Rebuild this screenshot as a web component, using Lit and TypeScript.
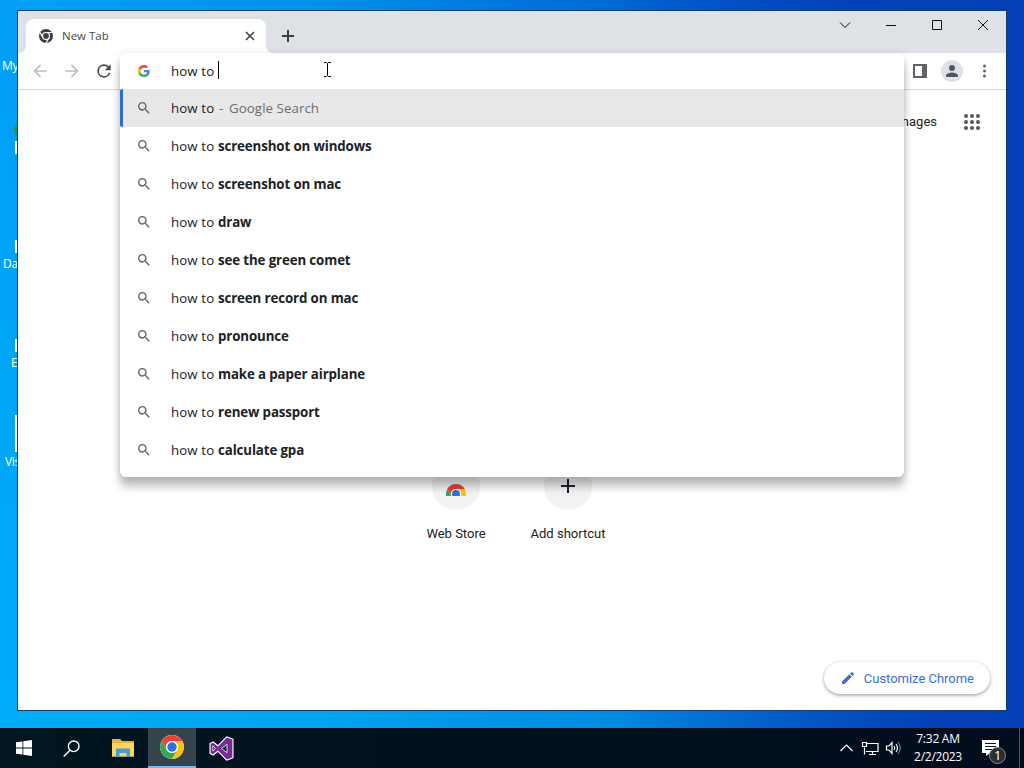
import { LitElement, html, svg, css, nothing } from 'lit';
import { customElement, property } from 'lit/decorators.js';

const QUERY = 'how to ';

const SUGGESTIONS = [
  'screenshot on windows',
  'screenshot on mac',
  'draw',
  'see the green comet',
  'screen record on mac',
  'pronounce',
  'make a paper airplane',
  'renew passport',
  'calculate gpa',
];

const SEARCH_PATH =
  'M15.5 14h-.79l-.28-.27A6.47 6.47 0 0 0 16 9.5 6.5 6.5 0 1 0 9.5 16c1.61 0 3.09-.59 4.23-1.57l.27.28v.79l5 4.99L20.49 19l-4.99-5zm-6 0C7.01 14 5 11.99 5 9.5S7.01 5 9.5 5 14 7.01 14 9.5 11.99 14 9.5 14z';
const BACK_PATH = 'M20 11H7.83l5.59-5.59L12 4l-8 8 8 8 1.41-1.41L7.83 13H20v-2z';
const FORWARD_PATH = 'M12 4l-1.41 1.41L16.17 11H4v2h12.17l-5.58 5.59L12 20l8-8z';
const RELOAD_PATH =
  'M17.65 6.35A7.96 7.96 0 0 0 12 4a8 8 0 1 0 7.73 10h-2.08A6 6 0 1 1 12 6c1.66 0 3.14.69 4.22 1.78L13 11h7V4l-2.35 2.35z';
const PERSON_PATH = 'M12 12a4 4 0 1 0 0-8 4 4 0 0 0 0 8zm0 2c-2.67 0-8 1.34-8 4v2h16v-2c0-2.66-5.33-4-8-4z';
const PENCIL_PATH =
  'M3 17.25V21h3.75L17.81 9.94l-3.75-3.75L3 17.25zM20.71 7.04a1 1 0 0 0 0-1.41l-2.34-2.34a1 1 0 0 0-1.41 0l-1.83 1.83 3.75 3.75 1.83-1.83z';

const chromeLogo = (size: number) => html`
  <svg width=${size} height=${size} viewBox="0 0 48 48">
    <circle cx="24" cy="24" r="22" fill="#fff" />
    <path fill="#ea4335" d="M24 13h19.05A22 22 0 0 0 4.95 13l9.52 16.5A11 11 0 0 1 24 13z" />
    <path fill="#fbc116" d="M33.53 29.5 24 46a22 22 0 0 0 19.05-33H24a11 11 0 0 1 9.53 16.5z" />
    <path fill="#34a853" d="M14.47 29.5 4.95 13A22 22 0 0 0 24 46l9.53-16.5a11 11 0 0 1-19.06 0z" />
    <circle cx="24" cy="24" r="11" fill="#fff" />
    <circle cx="24" cy="24" r="8.8" fill="#2f70e0" />
  </svg>
`;

@customElement('line-icon')
export class LineIcon extends LitElement {
  @property() path = '';
  @property({ type: Number }) size = 20;

  static override styles = css`
    :host {
      display: flex;
    }

    svg {
      fill: currentColor;
    }
  `;

  protected override render() {
    return html`<svg width=${this.size} height=${this.size} viewBox="0 0 24 24"><path d=${this.path} /></svg>`;
  }
}

@customElement('omnibox-popup')
export class OmniboxPopup extends LitElement {
  static override styles = css`
    :host {
      display: block;
      height: 424px;
      background: #fff;
      border-radius: 6px;
      box-shadow:
        0 10px 9px rgba(0, 0, 0, 0.24),
        0 1px 8px rgba(0, 0, 0, 0.12);
      font: 13.3px/18px 'Open Sans', 'Noto Sans', sans-serif;
      color: #202124;
    }

    .input,
    .row {
      display: flex;
      align-items: center;
      box-sizing: border-box;
      height: 38px;
      padding-left: 16px;
      white-space: pre;
    }

    .input {
      height: 36px;
    }

    .icon {
      display: flex;
      justify-content: center;
      width: 16px;
      margin-right: 19px;
      color: #5f6368;
    }

    .query {
      width: 47px;
      letter-spacing: 0.1px;
    }

    .caret {
      width: 1px;
      height: 18px;
      margin-top: -2px;
      background: #000;
    }

    .pointer {
      margin: -4px 0 0 104px;
    }

    .selected {
      padding-left: 13px;
      border-left: 3px solid #2f6fd0;
      border-radius: 2px 0 0 2px;
      background: #e8e8e8;
    }

    .dash {
      width: 10px;
      margin-left: 1px;
      color: #6b6e72;
    }

    .source {
      letter-spacing: 0.06px;
      color: #6b6e72;
    }

    .match {
      font-weight: 700;
      letter-spacing: -0.12px;
    }
  `;

  private _row(content: unknown, selected = false) {
    return html`
      <div class="row ${selected ? 'selected' : ''}">
        <span class="icon"><line-icon .path=${SEARCH_PATH} .size=${16}></line-icon></span>
        <span class="query">${QUERY}</span>${content}
      </div>
    `;
  }

  protected override render() {
    return html`
      <div class="input">
        <span class="icon">
          <svg width="12" height="12" viewBox="0 0 48 48">
            <path fill="#4285f4" d="M47 24.5c0-1.6-.2-3.2-.5-4.7H24v9h12.9c-.6 3-2.3 5.5-4.8 7.2v6h7.8C44.4 37.8 47 31.7 47 24.5z" />
            <path fill="#34a853" d="M24 48c6.5 0 11.9-2.1 15.9-5.9l-7.8-6c-2.1 1.4-4.9 2.3-8.1 2.3-6.3 0-11.5-4.2-13.4-9.9h-8v6.2C6.6 42.6 14.6 48 24 48z" />
            <path fill="#fbbc05" d="M10.6 28.5a14.4 14.4 0 0 1 0-9.1v-6.2h-8a24 24 0 0 0 0 21.5l8-6.2z" />
            <path fill="#ea4335" d="M24 9.5c3.5 0 6.7 1.2 9.2 3.6l6.9-6.9C35.9 2.4 30.5 0 24 0 14.6 0 6.6 5.4 2.6 13.2l8 6.2C12.5 13.7 17.7 9.5 24 9.5z" />
          </svg>
        </span>
        <span class="query">${QUERY}</span><span class="caret"></span>
        <svg class="pointer" width="9" height="17" viewBox="0 0 9 17" fill="none" stroke="#000">
          <path d="M1 1.5h2.5l1 1 1-1H8M4.5 2.5v12M1 15.5h2.5l1-1 1 1H8" />
        </svg>
      </div>
      ${this._row(html`<span class="dash">-</span><span class="source">Google Search</span>`, true)}
      ${SUGGESTIONS.map((text) => this._row(html`<span class="match">${text}</span>`))}
    `;
  }
}

@customElement('browser-window')
export class BrowserWindow extends LitElement {
  static override styles = css`
    :host {
      display: flex;
      flex-direction: column;
      background: #fff;
      font-family: Roboto, sans-serif;
      color: #202124;
    }

    svg {
      display: block;
    }

    .tabs {
      display: flex;
      height: 42px;
      background: #dee1e6;
    }

    .tab {
      position: relative;
      display: flex;
      align-items: center;
      box-sizing: border-box;
      width: 240px;
      height: 34px;
      margin: 8px 0 0 8px;
      padding: 0 10px 0 13px;
      border-radius: 8px 8px 0 0;
      background: #fff;
      font: 11.5px/16px 'Open Sans', sans-serif;
      color: #45494d;
    }

    /* outward curves at the foot of the tab */
    .tab::before,
    .tab::after {
      content: '';
      position: absolute;
      bottom: 0;
      width: 8px;
      height: 8px;
    }

    .tab::before {
      left: -8px;
      background: radial-gradient(circle at 0 0, transparent 8px, #fff 8px);
    }

    .tab::after {
      right: -8px;
      background: radial-gradient(circle at 100% 0, transparent 8px, #fff 8px);
    }

    .tab-title {
      flex: 1;
      margin-left: 9px;
    }

    .new-tab {
      margin: 19px 0 0 16px;
    }

    .controls {
      margin: 8px 17px 0 auto;
    }

    .toolbar {
      display: flex;
      align-items: center;
      box-sizing: border-box;
      height: 37px;
      padding: 0 19px 0 12px;
      border-bottom: 1px solid #d5d7da;
    }

    .nav {
      display: flex;
      gap: 12px;
      color: #bcbec1;
    }

    .reload {
      color: #45494d;
    }

    .actions {
      display: flex;
      align-items: center;
      margin-left: auto;
      color: #5f6368;
    }

    .avatar {
      display: flex;
      align-items: center;
      justify-content: center;
      width: 22px;
      height: 22px;
      margin: 0 19px 0 14px;
      border-radius: 50%;
      background: #dfe1e9;
      color: #54585d;
    }

    .links {
      display: flex;
      align-items: center;
      justify-content: flex-end;
      height: 64px;
      padding-right: 26px;
      font-size: 13px;
    }

    .links span {
      padding-bottom: 2px;
    }

    .apps {
      margin-left: 27px;
    }

    .shortcuts {
      display: flex;
      justify-content: center;
      margin-top: 308px;
      font-size: 13px;
      line-height: 18px;
    }

    .shortcut {
      display: flex;
      flex-direction: column;
      align-items: center;
      width: 112px;
    }

    .disc {
      display: flex;
      align-items: center;
      justify-content: center;
      width: 48px;
      height: 48px;
      margin-bottom: 15px;
      border-radius: 50%;
      background: #f1f3f4;
    }

    .half {
      height: 13px;
      margin-top: 7px;
      overflow: hidden;
    }

    .customize {
      display: flex;
      align-items: center;
      align-self: flex-end;
      box-sizing: border-box;
      height: 32px;
      margin: auto 16px 16px 0;
      padding: 0 16px;
      border-radius: 16px;
      box-shadow:
        0 1px 3px rgba(0, 0, 0, 0.3),
        0 2px 5px rgba(0, 0, 0, 0.12);
      font-size: 13px;
      letter-spacing: -0.02px;
      color: #3b6fd0;
    }

    .customize line-icon {
      margin-right: 8px;
    }

    omnibox-popup {
      position: absolute;
      top: 42px;
      left: 102px;
      width: 784px;
    }
  `;

  protected override render() {
    return html`
      <div class="tabs">
        <div class="tab">
          <svg width="14" height="14" viewBox="0 0 48 48">
            <circle cx="24" cy="24" r="24" fill="#3c4043" />
            <circle cx="24" cy="24" r="12" fill="none" stroke="#fff" stroke-width="4" />
            <path d="M24 12h22M13.6 30 3 11M34.4 30 24 48" stroke="#fff" stroke-width="4" />
          </svg>
          <span class="tab-title">New Tab</span>
          <svg width="12" height="12" viewBox="0 0 12 12" stroke="#3c4043" stroke-width="1.6">
            <path d="M2 2l8 8M10 2l-8 8" />
          </svg>
        </div>
        <svg class="new-tab" width="12" height="12" viewBox="0 0 12 12" stroke="#3c4043" stroke-width="2">
          <path d="M6 0v12M0 6h12" />
        </svg>
        <svg class="controls" width="150" height="12" viewBox="0 0 150 12" fill="none" stroke="#111">
          <path d="M1 3.5l5 5 5-5M47 6.5h10" />
          <path d="M93.5 1.5h9v9h-9z" />
          <path d="M139 1l10 10M149 1l-10 10" />
        </svg>
      </div>
      <div class="toolbar">
        <div class="nav">
          <line-icon .path=${BACK_PATH} .size=${20}></line-icon>
          <line-icon .path=${FORWARD_PATH} .size=${20}></line-icon>
          <line-icon class="reload" .path=${RELOAD_PATH} .size=${20}></line-icon>
        </div>
        <div class="actions">
          <svg width="14" height="14" viewBox="0 0 14 14">
            <path d="M1 1h12v12H1z" fill="none" stroke="currentColor" stroke-width="2" />
            <path d="M9 1h4v12H9z" fill="currentColor" />
          </svg>
          <div class="avatar"><line-icon .path=${PERSON_PATH} .size=${18}></line-icon></div>
          <svg width="5" height="14" viewBox="0 0 5 14" fill="currentColor">
            <circle cx="2.5" cy="2" r="1.5" />
            <circle cx="2.5" cy="7" r="1.5" />
            <circle cx="2.5" cy="12" r="1.5" />
          </svg>
        </div>
      </div>
      <div class="links">
        <span>Images</span>
        <svg class="apps" width="16" height="16" viewBox="0 0 16 16" fill="#54585d">
          ${[2, 8, 14].map((y) => [2, 8, 14].map((x) => svg`<circle cx=${x} cy=${y} r="2" />`))}
        </svg>
      </div>
      <div class="shortcuts">
        <div class="shortcut">
          <div class="disc"><div class="half">${chromeLogo(22)}</div></div>
          Web Store
        </div>
        <div class="shortcut">
          <div class="disc">
            <svg width="14" height="14" viewBox="0 0 14 14" stroke="#202124" stroke-width="2">
              <path d="M7 0v14M0 7h14" />
            </svg>
          </div>
          Add shortcut
        </div>
      </div>
      <div class="customize"><line-icon .path=${PENCIL_PATH} .size=${16}></line-icon>Customize Chrome</div>
      <omnibox-popup></omnibox-popup>
    `;
  }
}

@customElement('task-bar')
export class TaskBar extends LitElement {
  static override styles = css`
    :host {
      display: flex;
      background: linear-gradient(90deg, #01161f, #01101f 60%, #020c1d);
      font: 12px/18px 'Open Sans', sans-serif;
      letter-spacing: -0.25px;
      color: #fff;
    }

    .item {
      display: flex;
      align-items: center;
      justify-content: center;
      box-sizing: border-box;
      width: 48px;
    }

    .search {
      padding-right: 1px;
      margin-right: 4px;
    }

    .explorer {
      padding-right: 3px;
    }

    .active {
      border-bottom: 2px solid #76b9ed;
      background: #35434c;
    }

    .studio {
      padding-left: 2px;
    }

    .tray {
      display: flex;
      align-items: center;
      margin-left: auto;
    }

    .clock {
      width: 62px;
      margin-left: 6px;
      text-align: center;
    }

    .notify {
      position: relative;
      display: flex;
      margin: 0 20px 0 13px;
    }

    .badge {
      position: absolute;
      top: 7px;
      left: 7px;
      width: 15px;
      height: 15px;
      border: 1px solid #888;
      border-radius: 50%;
      background: #2a2d33;
      font-size: 13px;
      line-height: 15px;
      text-align: center;
    }

    .peek {
      align-self: stretch;
      width: 4px;
      border-left: 1px solid #4a5360;
    }
  `;

  protected override render() {
    return html`
      <div class="item">
        <svg width="16" height="16" viewBox="0 0 16 16" fill="#fff">
          <path d="M0 2.3 6.5 1.4v6.2H0zM7.3 1.3 16 0v7.6H7.3zM0 8.4h6.5v6.2L0 13.7zM7.3 8.4H16V16l-8.7-1.3z" />
        </svg>
      </div>
      <div class="item search">
        <svg width="17" height="17" viewBox="0 0 17 17" fill="none" stroke="#fff" stroke-width="1.4">
          <circle cx="10.7" cy="6.3" r="5.3" />
          <path d="M7 10.2.7 16.5" />
        </svg>
      </div>
      <div class="item explorer">
        <svg width="22" height="18" viewBox="0 0 22 18">
          <path d="M0 0h8l2 2h12v15.5H0z" fill="#e8b33d" />
          <path d="M0 4h22v13.5H0z" fill="#fbd667" />
          <path d="M4 18V9.5h14V18h-3.5v-4h-7v4z" fill="#4a9cc9" />
        </svg>
      </div>
      <div class="item active">${chromeLogo(26)}</div>
      <div class="item studio">
        <svg width="25" height="25" viewBox="0 0 24 24" stroke="#fff" stroke-linejoin="round">
          <path
            fill="#7a2a94"
            stroke-width="1.1"
            d="M17 .8l6 2.4v17.6l-6 2.4-8.5-8.6L4 18.2 1 16.8V7.2l3-1.4 4.5 3.6z"
          />
          <path fill="#0a1626" stroke-width=".8" d="M17.300 8v8L12 12zM3.700 9.600v4.800L6.200 12z" />
        </svg>
      </div>
      <div class="tray">
        <svg width="61" height="16" viewBox="0 0 61 16" fill="none" stroke="#fff" stroke-width="1.2">
          <path d="M.5 11 6.5 5l6 6" />
          <path d="M27 3.5h11v8H26M24.5 7.5v7M29 14.5h7M32.5 11.5v3M22.5 2.5h4v4h-4z" />
          <path d="M46.5 6H49l3-3.5v11L49 10h-2.5z" />
          <path d="M54 6q1.5 2 0 4M56 4q3 4 0 8" />
          <path d="M58 2q4.5 6 0 12" stroke="#78808a" />
        </svg>
        <div class="clock">7:32 AM<br />2/2/2023</div>
        <div class="notify">
          <svg width="17" height="16" viewBox="0 0 17 16">
            <path d="M0 0h17v13H8l-4 3v-3H0z" fill="#fff" />
            <path d="M3 3.5h11M3 6.5h11M3 9.5h7" stroke="#06101f" />
          </svg>
          <span class="badge">1</span>
        </div>
        <div class="peek"></div>
      </div>
    `;
  }
}

interface DesktopIcon {
  label: string;
  x: number;
  y: number;
  markTop?: number;
  markHeight?: number;
}

const DESKTOP_ICONS: DesktopIcon[] = [
  { label: 'My', x: 2, y: 58 },
  { label: 'Da', x: 3, y: 256, markTop: 240, markHeight: 13 },
  { label: 'Ex', x: 11, y: 355, markTop: 339, markHeight: 13 },
  { label: 'Vis', x: 5, y: 454, markTop: 415, markHeight: 37 },
];

@customElement('app-root')
export class AppRoot extends LitElement {
  static override styles = css`
    :host {
      position: relative;
      display: flex;
      flex-direction: column;
      width: 1024px;
      height: 768px;
      overflow: hidden;
      background:
        linear-gradient(90deg, transparent 60%, #0340b8 92%),
        linear-gradient(180deg, transparent 10%, rgba(0, 195, 250, 0.4)),
        linear-gradient(90deg, #00a0f6, #0092ec 30%, #0066d4 62%, #0340b8 90%);
    }

    .desktop {
      position: relative;
      flex: 1;
    }

    .label {
      position: absolute;
      font: 12px/16px 'Open Sans', sans-serif;
      letter-spacing: -0.3px;
      color: #fff;
    }

    .mark {
      position: absolute;
      left: 15px;
      width: 3px;
      background: #fff;
    }

    .leaf {
      position: absolute;
      top: 124px;
      left: 14px;
      width: 8px;
      height: 12px;
      border-radius: 50%;
      background: #1e9a5a;
    }

    browser-window {
      position: absolute;
      top: 10px;
      left: 17px;
      width: 988px;
      height: 699px;
      border: 1px solid #12406b;
    }

    task-bar {
      height: 40px;
    }
  `;

  protected override render() {
    return html`
      <div class="desktop">
        ${DESKTOP_ICONS.map(
          (icon) => html`
            <span class="label" style="left:${icon.x}px;top:${icon.y}px">${icon.label}</span>
            ${icon.markTop
              ? html`<span class="mark" style="top:${icon.markTop}px;height:${icon.markHeight}px"></span>`
              : nothing}
          `,
        )}
        <span class="leaf"></span>
        <span class="mark" style="top:141px;height:13px"></span>
        <browser-window></browser-window>
      </div>
      <task-bar></task-bar>
    `;
  }
}

declare global {
  interface HTMLElementTagNameMap {
    'app-root': AppRoot;
    'browser-window': BrowserWindow;
    'omnibox-popup': OmniboxPopup;
    'line-icon': LineIcon;
    'task-bar': TaskBar;
  }
}
